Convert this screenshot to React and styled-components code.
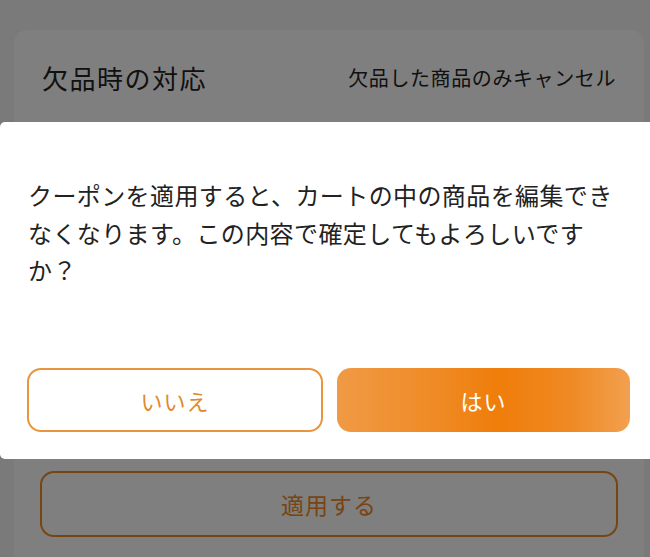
import React from 'react';
import styled, { createGlobalStyle } from 'styled-components';

const GlobalStyle = createGlobalStyle`
  html, body {
    margin: 0;
    padding: 0;
    background: #f4f4f4;
    font-family: "Noto Sans CJK JP", "Noto Sans", sans-serif;
  }
`;

const Page = styled.div`
  position: relative;
  height: 557px;
  overflow: hidden;
  padding: 30px 6px 0 14px;
  box-sizing: border-box;
`;

const Card = styled.section`
  background: #ffffff;
  border-radius: 14px;
  padding: 0 26px 40px 26px;
  display: flex;
  flex-direction: column;
`;

const SettingRow = styled.div`
  height: 94px;
  display: flex;
  align-items: center;
  justify-content: space-between;
  padding: 0 0 0 2px;
`;

const SettingLabel = styled.h2`
  margin: 0;
  font-size: 26px;
  font-weight: 400;
  letter-spacing: 1.5px;
  color: #222;
`;

const SettingValue = styled.span`
  font-size: 20px;
  letter-spacing: 0.6px;
  color: #222;
  margin-right: 2px;
`;

const Filler = styled.div`
  height: 347px;
`;

const ApplyButton = styled.button`
  height: 66px;
  border: 2px solid #f08a24;
  border-radius: 14px;
  background: #ffffff;
  color: #f08a24;
  font-family: inherit;
  font-size: 23px;
  letter-spacing: 1px;
`;

const Overlay = styled.div`
  position: absolute;
  inset: 0;
  background: rgba(0, 0, 0, 0.5);
`;

const Dialog = styled.div`
  position: absolute;
  top: 122px;
  left: 0;
  width: 660px;
  height: 337px;
  background: #ffffff;
  border-radius: 5px;
  box-sizing: border-box;
  padding: 54px 0 0 28px;
  display: flex;
  flex-direction: column;
`;

const Message = styled.p`
  margin: 0;
  width: 596px;
  font-size: 24px;
  line-height: 37.5px;
  letter-spacing: 0.4px;
  color: #222;
  height: 138px;
`;

const Actions = styled.div`
  margin-top: 54px;
  display: flex;
  gap: 14px;
  margin-left: -1px;
`;

const DialogButton = styled.button`
  width: ${(p) => (p.$primary ? '293px' : '296px')};
  height: 64px;
  box-sizing: border-box;
  border-radius: 14px;
  font-family: inherit;
  font-size: 22px;
  letter-spacing: 1px;
  border: ${(p) => (p.$primary ? 'none' : '2px solid #e9953f')};
  color: ${(p) => (p.$primary ? '#ffffff' : '#e08a2c')};
  background: ${(p) =>
    p.$primary
      ? 'linear-gradient(90deg, #f09a45 0%, #ef8a24 35%, #ef7d0a 55%, #ef8a24 80%, #f2a050 100%)'
      : '#ffffff'};
`;

export default function App() {
  return (
    <>
      <GlobalStyle />
      <Page>
        <Card>
          <SettingRow>
            <SettingLabel>欠品時の対応</SettingLabel>
            <SettingValue>欠品した商品のみキャンセル</SettingValue>
          </SettingRow>
          <Filler />
          <ApplyButton>適用する</ApplyButton>
        </Card>
        <Overlay />
        <Dialog>
          <Message>
            クーポンを適用すると、カートの中の商品を編集できなくなります。この内容で確定してもよろしいですか？
          </Message>
          <Actions>
            <DialogButton>いいえ</DialogButton>
            <DialogButton $primary>はい</DialogButton>
          </Actions>
        </Dialog>
      </Page>
    </>
  );
}
